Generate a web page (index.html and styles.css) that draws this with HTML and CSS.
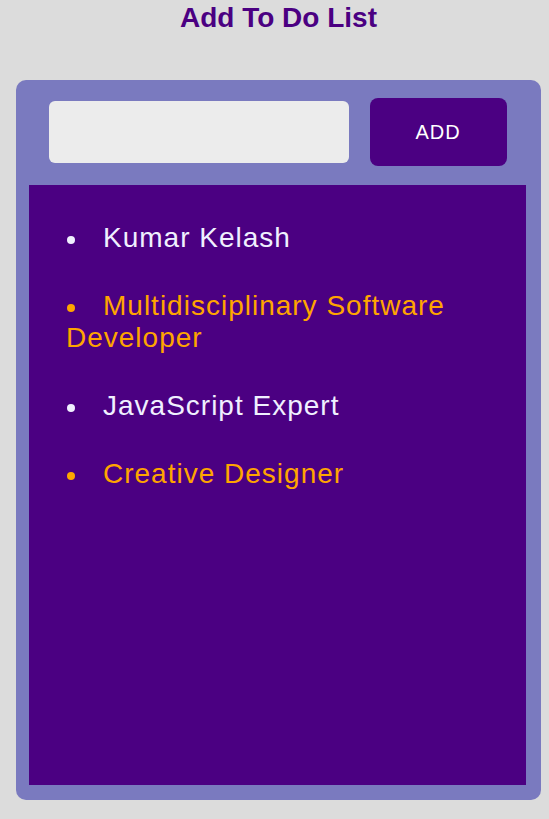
FILE: index.html
```html
<!DOCTYPE html>
<html lang="en">
<head>
<meta charset="utf-8">
<title>Add To Do List</title>
<link rel="stylesheet" href="styles.css">
</head>
<body>
<div class="app">
  <h1 class="title">Add To Do List</h1>
  <div class="card">
    <div class="entry">
      <input class="entry-input" type="text" aria-label="New item">
      <button class="entry-button" type="button">ADD</button>
    </div>
    <ul class="todo-list">
      <li class="todo-item">Kumar Kelash</li>
      <li class="todo-item">Multidisciplinary Software Developer</li>
      <li class="todo-item">JavaScript Expert</li>
      <li class="todo-item">Creative Designer</li>
    </ul>
  </div>
</div>
</body>
</html>
```

FILE: styles.css
```css
html, body {
  margin: 0;
  padding: 0;
}

body {
  background: #dcdcdc;
  font-family: "Liberation Sans", Arial, sans-serif;
}

.app {
  width: 525px;
  margin-left: 16px;
}

.title {
  margin: 2px 0 0;
  font-size: 28px;
  font-weight: bold;
  line-height: normal;
  text-align: center;
  color: #4b0082;
}

.card {
  margin-top: 46px;
  box-sizing: border-box;
  width: 525px;
  padding: 18px 15px 15px 13px;
  border-radius: 10px;
  background: #7a7abf;
}

.entry {
  display: flex;
  justify-content: center;
  align-items: center;
  gap: 21px;
  margin-bottom: 19px;
}

.entry-input {
  box-sizing: border-box;
  width: 300px;
  height: 62px;
  border: none;
  border-radius: 6px;
  background: #ececec;
  padding: 0 12px;
  font: 20px "Liberation Sans", Arial, sans-serif;
  outline: none;
}

.entry-button {
  box-sizing: border-box;
  width: 137px;
  height: 68px;
  border: none;
  border-radius: 8px;
  background: #4b0082;
  color: #ffffff;
  font: 20px "Liberation Sans", Arial, sans-serif;
  letter-spacing: 1px;
  cursor: pointer;
}

.todo-list {
  box-sizing: border-box;
  height: 600px;
  margin: 0;
  padding: 37px 20px 0 37px;
  list-style: none;
  background: #4b0082;
}

.todo-item {
  margin: 0 0 36px;
  font-size: 28px;
  line-height: normal;
  letter-spacing: 1px;
  color: #f0f0ff;
}

.todo-item:nth-child(even) {
  color: #ffa500;
}

.todo-item::before {
  content: "";
  display: inline-block;
  width: 8px;
  height: 8px;
  margin: 0 28px 0 1px;
  border-radius: 50%;
  background: currentColor;
  vertical-align: middle;
}
```
